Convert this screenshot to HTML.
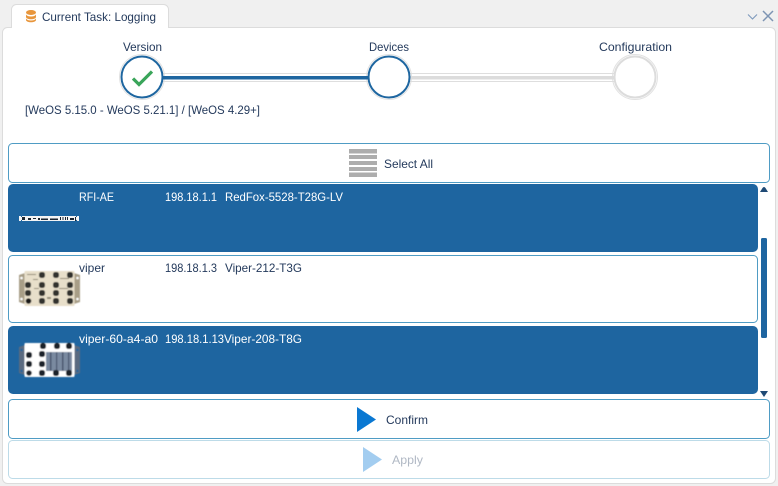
<!DOCTYPE html>
<html><head><meta charset="utf-8">
<style>
html,body{margin:0;padding:0;background:#f0f0f0;width:778px;height:486px;overflow:hidden}
svg{display:block}
text{font-family:"Liberation Sans",sans-serif;font-size:12px;fill:#243a5c}
.w{fill:#fff}
</style></head><body>
<svg width="778" height="486" viewBox="0 0 778 486" xmlns="http://www.w3.org/2000/svg">
<defs>
<filter id="s" x="-5%" y="-5%" width="110%" height="110%"><feGaussianBlur stdDeviation="0.45"/></filter>
<path id="p" d="M-1.500-3h3L3-1.500v3L1.500 3h-3L-3 1.500v-3z"/>
</defs>
<rect width="778" height="486" fill="#f0f0f0"/>
<!-- panel -->
<rect x="2.500" y="27.500" width="773" height="456" rx="5" fill="#fff" stroke="#dcdcdc"/>
<!-- tab -->
<path d="M11.500 28V9.500a5 5 0 0 1 5-5H163.500a5 5 0 0 1 5 5V28" fill="#fff" stroke="#dcdcdc"/>
<rect x="12" y="26" width="156" height="3" fill="#fff"/>
<!-- db icon -->
<g fill="#e8963c">
<ellipse cx="31" cy="12.500" rx="5" ry="2.500"/>
<path d="M26 14.500c1 1.500 3 2 5 2s4-.5 5-2v2.500c0 1.300-2.200 2.300-5 2.300s-5-1-5-2.300z"/>
<path d="M26 18.500c1 1.500 3 2 5 2s4-.5 5-2v1.500c0 1.300-2.200 2.300-5 2.300s-5-1-5-2.300z"/>
</g>
<text x="42" y="21" textLength="114" lengthAdjust="spacingAndGlyphs">Current Task: Logging</text>
<!-- window controls -->
<path d="M748 14.500l4.500 4.500L757 14.500" fill="none" stroke="#7d99bb" stroke-width="1.100"/>
<path d="M763 11l10 10M773 11l-10 10" fill="none" stroke="#7d94b3" stroke-width="1.500"/>
<!-- stepper labels -->
<text x="123" y="51" textLength="39" lengthAdjust="spacingAndGlyphs">Version</text>
<text x="369" y="51" textLength="40" lengthAdjust="spacingAndGlyphs">Devices</text>
<text x="599" y="51" textLength="73" lengthAdjust="spacingAndGlyphs">Configuration</text>
<!-- circles outer -->
<circle cx="142" cy="77" r="22.500" fill="#fff" stroke="#e2e2e2"/>
<circle cx="389" cy="77" r="22.500" fill="#fff" stroke="#e2e2e2"/>
<circle cx="635" cy="77" r="22.500" fill="#fff" stroke="#e2e2e2"/>
<!-- connecting lines -->
<path d="M162 73.500H369M162 81.500H369M409 73.500H615M409 81.500H615" stroke="#dedede" fill="none"/>
<rect x="160" y="76" width="210" height="3.500" fill="#1e66a0"/>
<rect x="408" y="76" width="208" height="3.500" fill="#dcdcdc"/>
<!-- circles inner -->
<circle cx="142" cy="77" r="20.500" fill="#fff" stroke="#1e66a0" stroke-width="2"/>
<path d="M133 78.500l6 6 13-13" fill="none" stroke="#3aa55a" stroke-width="3.200"/>
<circle cx="389" cy="77" r="20.500" fill="#fff" stroke="#1e66a0" stroke-width="2"/>
<circle cx="635" cy="77" r="20.500" fill="#fff" stroke="#dcdcdc" stroke-width="2"/>
<text x="25" y="114" textLength="235" lengthAdjust="spacingAndGlyphs">[WeOS 5.15.0 - WeOS 5.21.1] / [WeOS 4.29+]</text>
<!-- select all -->
<rect x="8.500" y="143.500" width="761" height="39" rx="4" fill="#fff" stroke="#4f9cc4"/>
<g fill="#adadad">
<rect x="349" y="149" width="28" height="4.500"/>
<rect x="349" y="155" width="28" height="4"/>
<rect x="349" y="161" width="28" height="4"/>
<rect x="349" y="167" width="28" height="4"/>
<rect x="349" y="172.500" width="28" height="4.500"/>
</g>
<text x="384" y="168" textLength="49" lengthAdjust="spacingAndGlyphs">Select All</text>
<!-- item 1 -->
<rect x="8" y="184" width="750" height="68" rx="5" fill="#1e65a0"/>
<text class="w" x="79" y="201" textLength="35" lengthAdjust="spacingAndGlyphs">RFI-AE</text>
<text class="w" x="165" y="201" textLength="52" lengthAdjust="spacingAndGlyphs">198.18.1.1</text>
<text class="w" x="225" y="201" textLength="118" lengthAdjust="spacingAndGlyphs">RedFox-5528-T28G-LV</text>
<g>
<rect x="19" y="216" width="60" height="5" fill="#f4f4f4"/>
<path d="M22 217h3v3h-3zM28 218h3v2h-3zM33 218h3v1h-3zM38 218h2v2h-2zM41 218.500h7v1.500h-7zM50 218.500h8v1.500h-8zM60 217h1v3h-1zM62.500 217h1v3h-1zM65 217h1v3h-1zM67 217h1v3h-1zM70 218h4v2h-4zM75 217h1v4h-1z" fill="#1c2530"/>
<path d="M21 216h1v1h-1zM76 216h1v1h-1zM21 220h1v1h-1zM76 220h1v1h-1z" fill="#1e65a0"/>
</g>
<!-- item 2 -->
<rect x="8.500" y="255.500" width="749" height="67" rx="4" fill="#fff" stroke="#4f9cc4"/>
<text x="79" y="272" textLength="26" lengthAdjust="spacingAndGlyphs">viper</text>
<text x="165" y="272" textLength="52" lengthAdjust="spacingAndGlyphs">198.18.1.3</text>
<text x="225" y="272" textLength="77" lengthAdjust="spacingAndGlyphs">Viper-212-T3G</text>
<g filter="url(#s)">
<path d="M19 275l6-2v31l-6-2zM80 275l-6-2v31l6-2z" fill="#a89e87"/>
<rect x="24.500" y="271" width="50" height="35" rx="1" fill="#e8dfca"/>
<circle cx="21.500" cy="278" r="1.300" fill="#fff"/><circle cx="77.500" cy="278" r="1.300" fill="#fff"/><circle cx="21.500" cy="299" r="1.300" fill="#fff"/><circle cx="77.500" cy="299" r="1.300" fill="#fff"/>
<g fill="#33332e">
<use href="#p" x="42" y="275"/><use href="#p" x="56" y="275"/><use href="#p" x="70" y="275"/>
<use href="#p" x="28" y="285"/><use href="#p" x="42" y="285"/><use href="#p" x="56" y="285"/><use href="#p" x="70" y="285"/>
<use href="#p" x="28" y="293"/><use href="#p" x="42" y="293"/><use href="#p" x="56" y="293"/><use href="#p" x="70" y="293"/>
<use href="#p" x="42" y="301"/><use href="#p" x="56" y="301"/><use href="#p" x="70" y="301"/>
<circle cx="28.500" cy="301" r="2.800" fill="#141412"/>
</g>
<g fill="#8f8875"><rect x="27" y="274" width="9" height="1"/><rect x="60" y="278" width="9" height="1"/><rect x="34" y="288" width="5" height="1"/><rect x="59" y="288" width="9" height="1"/><rect x="47" y="297" width="4" height="2"/><rect x="33" y="279" width="5" height="1"/></g>
</g>
<!-- item 3 -->
<rect x="8" y="326" width="750" height="68" rx="5" fill="#1e65a0"/>
<text class="w" x="79" y="343" textLength="79" lengthAdjust="spacingAndGlyphs">viper-60-a4-a0</text>
<text class="w" x="165" y="343" textLength="59" lengthAdjust="spacingAndGlyphs">198.18.1.13</text>
<text class="w" x="224" y="343" textLength="78" lengthAdjust="spacingAndGlyphs">Viper-208-T8G</text>
<g filter="url(#s)">
<path d="M19 347l6-2v30l-6-2zM80 347l-6-2v30l6-2z" fill="#5a6b80"/>
<rect x="24.500" y="343" width="50" height="34" rx="1" fill="#fff"/>
<circle cx="21.500" cy="350" r="1.200" fill="#1e65a0"/><circle cx="77.500" cy="350" r="1.200" fill="#1e65a0"/><circle cx="21.500" cy="371" r="1.200" fill="#1e65a0"/><circle cx="77.500" cy="371" r="1.200" fill="#1e65a0"/>
<rect x="46" y="352" width="26" height="19" fill="#7a8aa0"/>
<g fill="#46556d"><rect x="50" y="352" width="1.500" height="19"/><rect x="56" y="352" width="1.200" height="19"/><rect x="62" y="352" width="1.500" height="19"/><rect x="68" y="352" width="1.200" height="19"/></g>
<g fill="#1f242c">
<use href="#p" x="43" y="346"/><use href="#p" x="57" y="346"/><use href="#p" x="69" y="346"/>
<use href="#p" x="29" y="355"/><use href="#p" x="42" y="354"/>
<use href="#p" x="29" y="364"/><use href="#p" x="42" y="364"/>
<use href="#p" x="42" y="373"/><use href="#p" x="56" y="373"/><use href="#p" x="69" y="373"/>
<circle cx="29" cy="373" r="2.800"/>
</g>
</g>
<!-- scrollbar -->
<path d="M760 192l2.500-4q1.500-2 3 0l2.500 4z" fill="#1f4a75"/>
<rect x="761" y="238" width="6" height="100" rx="1.500" fill="#1e65a0"/>
<path d="M760 391h8l-4 6z" fill="#1f4a75"/>
<!-- confirm -->
<rect x="8.500" y="399.500" width="761" height="39" rx="4" fill="#fff" stroke="#4f9cc4"/>
<path d="M357 407l19 12.500-19 12.500z" fill="#0a78d2"/>
<text x="386" y="424" textLength="42" lengthAdjust="spacingAndGlyphs">Confirm</text>
<!-- apply -->
<rect x="8.500" y="440.500" width="761" height="38" rx="4" fill="#fff" stroke="#bddbe8"/>
<path d="M363 447l19 12.500-19 12.500z" fill="#a3cdf0"/>
<text x="392" y="464" textLength="31" lengthAdjust="spacingAndGlyphs" style="fill:#b0b8c4">Apply</text>
</svg>
</body></html>
